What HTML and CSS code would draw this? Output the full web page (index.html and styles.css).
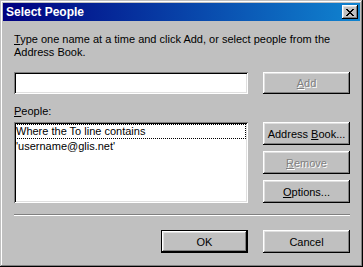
FILE: index.html
```html
<!DOCTYPE html>
<html lang="en">

<head>
    <meta charset="UTF-8">
    <title>Select People</title>
    <link rel="stylesheet" href="styles.css">
</head>

<body>
    <div class="window">
        <div class="titlebar">
            <span class="title">Select People</span>
            <span class="close-btn">
                <svg width="8" height="7" viewBox="0 0 8 7">
                    <path d="M0 0h2v1h1v1h2v-1h1v-1h2v1h-1v1h-1v1h-1v1h1v1h1v1h1v1h-2v-1h-1v-1h-2v1h-1v1h-2v-1h1v-1h1v-1h1v-1h-1v-1h-1v-1h-1z" fill="#000"/>
                </svg>
            </span>
        </div>
        <div class="content">
            <p class="intro"><u>T</u>ype one name at a time and click Add, or select people from the Address Book.</p>
            <div class="row">
                <div class="field"></div>
                <div class="btn disabled"><span><u>A</u>dd</span></div>
            </div>
            <div class="label"><u>P</u>eople:</div>
            <div class="row">
                <div class="list">
                    <div class="item focus">Where the To line contains</div>
                    <div class="item">'username@glis.net'</div>
                </div>
                <div class="side">
                    <div class="btn"><span>Address <u>B</u>ook...</span></div>
                    <div class="btn disabled"><span><u>R</u>emove</span></div>
                    <div class="btn"><span><u>O</u>ptions...</span></div>
                </div>
            </div>
            <div class="separator"></div>
            <div class="actions">
                <div class="btn default"><span>OK</span></div>
                <div class="btn"><span>Cancel</span></div>
            </div>
        </div>
    </div>
</body>
</html>
```

FILE: styles.css
```css
html,
body {
    margin: 0;
    padding: 0;
    background: #c0c0c0;
}

.window {
    width: 363px;
    height: 267px;
    box-sizing: border-box;
    padding: 3px;
    background: #c0c0c0;
    box-shadow: inset -1px -1px #000, inset 1px 1px #c0c0c0, inset -2px -2px #808080, inset 2px 2px #fff;
    font-family: "Liberation Sans", Arial, sans-serif;
    font-size: 11px;
    color: #000;
}

.titlebar {
    height: 18px;
    display: flex;
    align-items: center;
    justify-content: space-between;
    padding: 0 2px 0 3px;
    background: linear-gradient(to right, #000080, #1084d0);
}

.title {
    color: #fff;
    font-weight: bold;
    font-size: 12px;
}

.close-btn {
    width: 16px;
    height: 14px;
    display: flex;
    align-items: center;
    justify-content: center;
    background: #c0c0c0;
    box-shadow: inset -1px -1px #000, inset 1px 1px #fff, inset -2px -2px #808080, inset 2px 2px #dfdfdf;
}

.content {
    padding: 12px 10px 0 11px;
}

.intro {
    margin: 0;
    line-height: 13px;
}

.row {
    display: flex;
    justify-content: space-between;
    margin-top: 13px;
}

.field {
    width: 234px;
    height: 22px;
    background: #fff;
    box-shadow: inset 1px 1px #808080, inset -1px -1px #fff, inset 2px 2px #000, inset -2px -2px #dfdfdf;
}

.btn {
    width: 87px;
    height: 23px;
    box-sizing: border-box;
    display: flex;
    align-items: center;
    justify-content: center;
    background: #c0c0c0;
    box-shadow: inset -1px -1px #000, inset 1px 1px #fff, inset -2px -2px #808080, inset 2px 2px #dfdfdf;
}

.row .field + .btn {
    height: 22px;
}

.btn.disabled {
    color: #808080;
    text-shadow: 1px 1px #fff;
}

.btn.default {
    border: 1px solid #000;
}

.label {
    margin-top: 11px;
    line-height: 13px;
}

.label + .row {
    margin-top: 4px;
}

.list {
    width: 234px;
    height: 81px;
    box-sizing: border-box;
    padding: 2px;
    background: #fff;
    box-shadow: inset 1px 1px #808080, inset -1px -1px #fff, inset 2px 2px #000, inset -2px -2px #dfdfdf;
}

.item {
    height: 15px;
    line-height: 15px;
}

.item.focus {
    outline: 1px dotted #000;
    outline-offset: -1px;
    margin-left: -1px;
    padding-left: 1px;
}

.side {
    display: flex;
    flex-direction: column;
    gap: 6px;
}

.separator {
    margin-top: 11px;
    border-top: 1px solid #808080;
    border-bottom: 1px solid #fff;
}

.actions {
    display: flex;
    justify-content: flex-end;
    gap: 15px;
    margin-top: 14px;
}
```
